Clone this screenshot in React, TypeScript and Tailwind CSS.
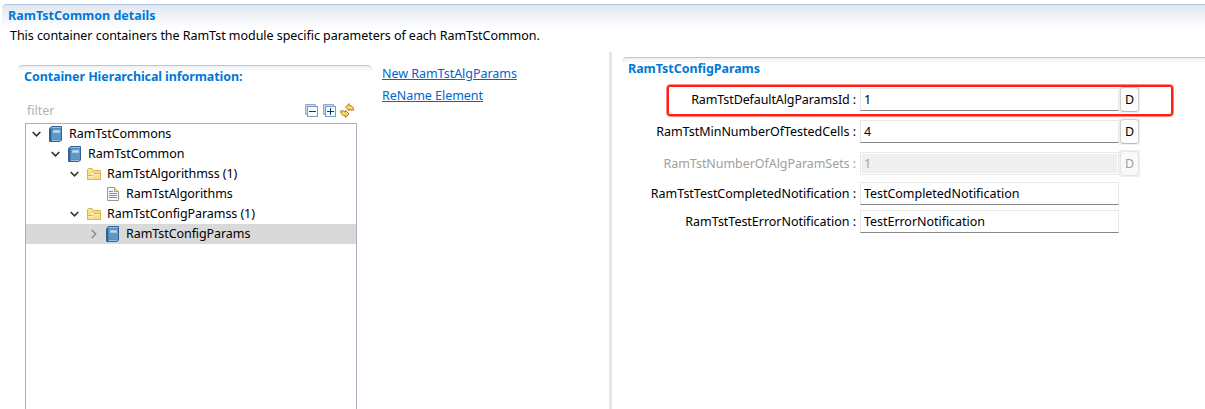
import React from "react";

const Book = () => (
  <svg width="14" height="16" viewBox="0 0 14 16" className="shrink-0">
    <path d="M.5 2.5 L2.5 .5 H12.5 V14 L11 15.5 H.5Z" fill="#4b86b8" stroke="#34609a" />
    <path d="M2.5 1.5 H12 M3 14.5 H11" stroke="#9cc1df" />
    <path d="M1.5 3 V15" stroke="#2f6296" />
    <rect x="3" y="2.5" width="9" height="11" fill="#5d98c9" />
    <rect x="4.5" y="4.5" width="6" height="2" fill="#c5dbed" stroke="#a5c6e1" />
  </svg>
);

const Folder = () => (
  <svg width="15" height="16" viewBox="0 0 15 16" className="shrink-0">
    <path d="M.5 13.5 V3.5 L1.5 2.5 H5 L6.5 4.5 H13.5 V13.5Z" fill="#fbe08c" stroke="#e0b04e" />
    <path d="M3.5 6.5 H11.5 V9.5 H3.5Z" fill="#fffdf2" stroke="#efd384" />
    <path d="M.5 13.5 V9.5 H5.5 L7 7.5 H13.5 V13.5Z" fill="#fbe08c" stroke="#e0b04e" />
    <path d="M1.5 10.5 H6 L7.5 8.5 H13" fill="none" stroke="#fff3c4" />
  </svg>
);

const Doc = () => (
  <svg width="14" height="16" viewBox="0 0 14 16" className="shrink-0">
    <path d="M1.5 1.5 H8.5 L12.5 5.5 V14.5 H1.5Z" fill="#f2f7ff" stroke="#9a9a86" />
    <path d="M8.5 1.5 V5.5 H12.5" fill="#f2dca0" stroke="#b8a271" />
    <path d="M3 5.5 H7 M3 7.5 H11 M3 9.5 H11 M3 11.5 H11" stroke="#6f91c8" />
  </svg>
);

const Chevron = ({ closed }: { closed?: boolean }) => (
  <svg width="10" height="10" viewBox="0 0 10 10" className="shrink-0" fill="none">
    {closed ? (
      <path d="M2.7 1 L6.7 5 L2.7 9" stroke="#8c8c8c" strokeWidth="1.5" />
    ) : (
      <path d="M.7 3 L4.5 6.8 L8.3 3" stroke="#333" strokeWidth="1.7" />
    )}
  </svg>
);

const Stack = ({ plus }: { plus?: boolean }) => (
  <svg width="13" height="13" viewBox="0 0 13 13">
    <path d="M.5 10.5 V.5 H10.5 V2.5 H2.5 V10.5Z" fill="#c7d8ec" stroke="#93abc9" />
    <rect x="2.5" y="2.5" width="10" height="10" fill="#f2fbff" stroke="#7e99bd" />
    <path d="M4 7.5 H11" stroke="#0b3f6d" />
    {plus && <path d="M7.5 4 V11" stroke="#0b3f6d" />}
  </svg>
);

const Refresh = () => (
  <svg width="15" height="15" viewBox="0 0 15 15" fill="#fbd768" stroke="#b27a18" strokeLinejoin="round">
    <path d="M5.5 4.2 L9 .6 V2.3 Q13.2 2.4 13.7 7 L10.9 7.3 Q10.8 6.1 9 6.1 V7.8 Z" />
    <path d="M5.3 7.3 L9 10.9 L5.3 14.5 V12.7 Q1 12.6 .6 8 L3.4 7.7 Q3.5 9 5.3 9 Z" />
  </svg>
);

const rows = [
  { text: "RamTstCommons", pad: "pl-[6px]", icon: "book", arrow: "open" },
  { text: "RamTstCommon", pad: "pl-[25px]", icon: "book", arrow: "open" },
  { text: "RamTstAlgorithmss (1)", pad: "pl-[44px]", icon: "folder", arrow: "open" },
  { text: "RamTstAlgorithms", pad: "pl-[63px]", icon: "doc", arrow: "none" },
  { text: "RamTstConfigParamss (1)", pad: "pl-[44px]", icon: "folder", arrow: "open" },
  { text: "RamTstConfigParams", pad: "pl-[63px]", icon: "book", arrow: "closed" },
];

const fields = [
  { label: "RamTstDefaultAlgParamsId :", value: "1", d: true, h: "h-8", ls: "tracking-[-0.11px]" },
  { label: "RamTstMinNumberOfTestedCells :", value: "4", d: true, h: "h-8", ls: "tracking-[-0.03px]" },
  { label: "RamTstNumberOfAlgParamSets :", value: "1", d: true, off: true, h: "h-8", ls: "tracking-[-0.06px]" },
  { label: "RamTstTestCompletedNotification :", value: "TestCompletedNotification", h: "h-7", ls: "tracking-[-0.03px]" },
  { label: "RamTstTestErrorNotification :", value: "TestErrorNotification", h: "h-7", ls: "tracking-[-0.03px]" },
];

export default function App() {
  return (
    <div className="flex h-[409px] w-full flex-col overflow-hidden whitespace-nowrap bg-white pl-[2px] pt-1 font-['Noto_Sans',sans-serif] text-[12.5px] leading-5 text-black">
      <header className="h-6 shrink-0 rounded-tl-[5px] border-t border-[#b4c7de] bg-linear-to-b from-[#e0e6f0] to-white pl-[6px] pt-px">
        <h1 className="font-bold text-[#0078d7]">RamTstCommon details</h1>
      </header>
      <p className="-mt-[2px] h-[26px] shrink-0 pl-[8px] tracking-[-0.045px]">
        This container containers the RamTst module specific parameters of each RamTstCommon.
      </p>
      <main className="flex min-h-0 flex-1">
        <section className="ml-4 mt-[13px] flex w-[354px] flex-col">
          <h2 className="h-[33px] shrink-0 rounded-t-[5px] border-t border-[#b4c7de] bg-linear-to-b from-[#edf1f7] to-white to-[6px] pl-[6px] pt-px font-bold tracking-[-0.09px] text-[#0078d7]">
            Container Hierarchical information:
          </h2>
          <div className="flex h-[25px] shrink-0 items-center pl-[9px] pr-[17px]">
            <span className="flex-1 text-[#b3b3b3]">filter</span>
            <span className="flex items-center gap-[5px]"><Stack /><Stack plus /><span className="-ml-px flex"><Refresh /></span></span>
          </div>
          <div className="ml-[7px] w-[332px] flex-1 border border-b-0 border-[#a9b1bf]">
            {rows.map((r, i) => (
              <div key={i} className={`flex h-5 items-center ${r.pad} ${r.arrow === "closed" ? "bg-[#d9d9d9]" : ""}`}>
                <span className="flex w-[17px] shrink-0">{r.arrow !== "none" && <Chevron closed={r.arrow === "closed"} />}</span>
                <span className="flex w-5 shrink-0">
                  {r.icon === "book" ? <Book /> : r.icon === "folder" ? <Folder /> : <Doc />}
                </span>
                <span className="tracking-[-0.08px]">{r.text}</span>
              </div>
            ))}
          </div>
        </section>
        <nav className="flex w-[237px] flex-col items-start gap-[2px] pl-[10px] pt-[12px] tracking-[-0.04px] text-[#0066cc]">
          <a className="underline">New RamTstAlgParams</a>
          <a className="underline">ReName Element</a>
        </nav>
        <div className="w-[3px] bg-[#e1e7f1]" />
        <section className="relative ml-[10px] mt-[5px] flex-1">
          <h2 className="h-[27px] rounded-tl-[5px] border-t border-[#b4c7de] bg-linear-to-b from-[#edf1f7] to-white to-[6px] pl-[6px] pt-px font-bold tracking-[-0.06px] text-[#0078d7]">
            RamTstConfigParams
          </h2>
          {fields.map((f, i) => (
            <div key={i} className={`flex items-center ${f.h} ${f.off ? "text-[#a0a0a0]" : ""}`}>
              <span className={`w-[234px] shrink-0 text-right ${f.ls}`}>{f.label}</span>
              <span className={`mb-px ml-[4px] flex h-[23px] w-[259px] items-center border border-[#e8e8e8] pl-[3px] pt-px ${f.off ? "bg-[#efefef] shadow-[inset_0_0_0_1px_#fff]" : "border-b-[#858585]"} tracking-[-0.04px]`}>
                {f.value}
              </span>
              {f.d && (
                <span className="mb-px flex h-[27px] w-[21px] items-center bg-[#f0f0f0] pl-px">
                  <span className={`flex h-[25px] w-[19px] items-center justify-center rounded-[4px] border ${f.off ? "border-[#e5e5e5] bg-[#f9f9f9]" : "border-[#d0d0d0] border-b-[#bbb] bg-[#fdfdfd]"}`}>D</span>
                </span>
              )}
            </div>
          ))}
          <div className="absolute left-[44px] top-[27px] h-[33px] w-[508px] rounded-[4px] border border-[#ff8a85]">
            <div className="h-full w-full rounded-[3px] border-2 border-[#ff1f16]" />
          </div>
        </section>
      </main>
    </div>
  );
}
